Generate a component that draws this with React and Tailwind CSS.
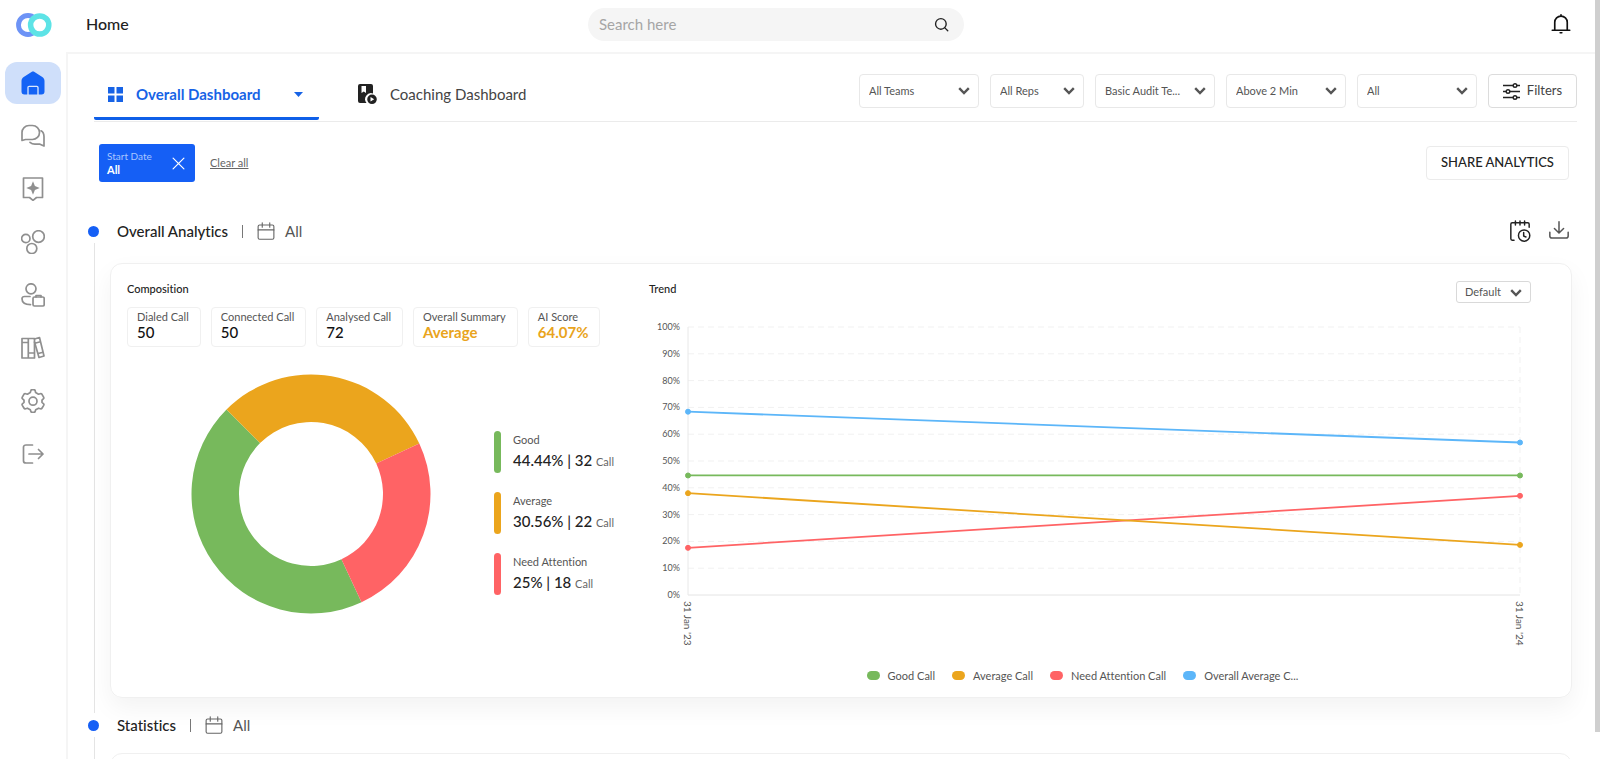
import React from 'react';
import clsx from 'clsx';

const GREEN = '#77b95c';
const ORANGE = '#eba51d';
const RED = '#ff6365';
const BLUE = '#5cb6f9';

const stats = [
  { label: 'Dialed Call', value: '50' },
  { label: 'Connected Call', value: '50' },
  { label: 'Analysed Call', value: '72' },
  { label: 'Overall Summary', value: 'Average', highlight: true },
  { label: 'AI Score', value: '64.07%', highlight: true },
];

const composition = [
  { label: 'Good', percent: '44.44%', calls: 32, color: GREEN, from: 155, to: 315 },
  { label: 'Average', percent: '30.56%', calls: 22, color: ORANGE, from: -45, to: 65 },
  { label: 'Need Attention', percent: '25%', calls: 18, color: RED, from: 65, to: 155 },
];

const trend = [
  { label: 'Good Call', color: GREEN, start: 44.6, end: 44.6 },
  { label: 'Need Attention Call', color: RED, start: 17.6, end: 37 },
  { label: 'Average Call', color: ORANGE, start: 38, end: 18.7 },
  { label: 'Overall Average Call', color: BLUE, start: 68.4, end: 56.9 },
];

const legend = [
  { label: 'Good Call', color: GREEN },
  { label: 'Average Call', color: ORANGE },
  { label: 'Need Attention Call', color: RED },
  { label: 'Overall Average C...', color: BLUE },
];

const ticks = [100, 90, 80, 70, 60, 50, 40, 30, 20, 10, 0];

const filters = [
  { label: 'Teams', value: 'All Teams', width: 'w-[120px]' },
  { label: 'Reps', value: 'All Reps', width: 'w-[94px]' },
  { label: 'Audit template', value: 'Basic Audit Te...', width: 'w-[120px]' },
  { label: 'Duration', value: 'Above 2 Min', width: 'w-[120px]' },
  { label: 'Type', value: 'All', width: 'w-[120px]' },
];

const Icon = ({ size = 24, stroke = 1.4, className, children }) => (
  <svg
    width={size}
    height={size}
    viewBox="0 0 24 24"
    fill="none"
    stroke="currentColor"
    strokeWidth={stroke}
    strokeLinecap="round"
    strokeLinejoin="round"
    className={clsx('shrink-0', className)}
    aria-hidden="true"
  >
    {children}
  </svg>
);

const Logo = () => (
  <svg width="36" height="24" viewBox="0 0 36 24" fill="none" aria-hidden="true">
    <circle cx="12" cy="12" r="9.5" stroke="#6d93f6" strokeWidth="4.800" />
    <circle cx="23.700" cy="12" r="9.100" fill="white" stroke="#5de3e6" strokeWidth="5.500" />
  </svg>
);

const navItems = [
  {
    name: 'Home',
    active: true,
    icon: (
      <>
        <path
          d="M12 .6c.5 0 1 .1 1.500.5l7.800 4.900c1.400.9 2.200 2.200 2.200 3.900v10.700c0 2-1 3-3 3h-17c-2 0-3-1-3-3V9.900C.5 8.200 1.300 6.900 2.700 6l7.800-4.900c.5-.4 1-.5 1.500-.5z"
          fill="currentColor"
          stroke="none"
        />
        <path d="M7 24V16.500c0-.8.400-1.200 1.200-1.200h7.600c.8 0 1.200.4 1.200 1.200V24" stroke="#dbe8fd" strokeWidth="1.300" />
      </>
    ),
  },
  {
    name: 'Conversations',
    icon: (
      <>
        <path d="M1 16.500V8.500a7 7 0 0 1 7-7h3.500a7 7 0 0 1 0 14H4.500z" />
        <path d="M9 18.300c1.300 1.200 3 1.900 4.900 1.900H19l4 1.800v-9.200c0-3-1.300-5.200-3-6" />
      </>
    ),
  },
  {
    name: 'Insights',
    icon: (
      <>
        <path d="M2.500 1h19v19.500h-6L12 23.300 8.500 20.500h-6z" />
        <path d="M12 4.300l1.900 4.800 4.800 1.900-4.800 1.900L12 17.700l-1.900-4.800-4.800-1.900 4.800-1.900z" fill="currentColor" stroke="none" />
      </>
    ),
  },
  {
    name: 'Teams',
    icon: (
      <>
        <circle cx="17.500" cy="6.500" r="5.800" />
        <circle cx="4.800" cy="8.500" r="4.200" />
        <circle cx="10.800" cy="18.500" r="5" />
      </>
    ),
  },
  {
    name: 'Accounts',
    icon: (
      <>
        <circle cx="10" cy="5.800" r="5" />
        <path d="M9 13.500H3.500C2 13.500 1 14.300 1 15.800c0 3.700 3 5.800 8.500 5.800" />
        <rect x="12" y="14" width="11.200" height="9" rx="1.500" />
        <path d="M15 14v-1.500h5V14" />
      </>
    ),
  },
  {
    name: 'Library',
    icon: (
      <>
        <path d="M1 2.500h12.500v19.500H1zM7.300 2.500V22M1 6.500h6.300M7.300 17h6.200" />
        <path d="M13.500 3l5-1.500 4.500 18.500-5 1.500L13.500 6M14.700 7l4.800-1.300M17.200 17.500l4.800-1.300" />
      </>
    ),
  },
  {
    name: 'Settings',
    icon: (
      <>
        <path d="M9.800 1.800C10 1 10.500.6 11.200.6h1.600c.7 0 1.200.4 1.400 1.200l.4 1.700 2.900 1.700 1.700-.5c.8-.2 1.400 0 1.800.6l1.600 2.800c.4.700.3 1.300-.3 1.800L21 11.100v2.300l1.400 1.200c.6.500.7 1.100.3 1.800L21.100 19c-.4.700-1 .9-1.800.7l-1.700-.5-2.900 1.600-.5 1.500c-.2.800-.7 1.100-1.400 1.100h-1.600c-.7 0-1.200-.4-1.400-1.100l-.5-1.500-2.900-1.600-1.700.5c-.8.200-1.400 0-1.800-.7l-1.600-2.600c-.4-.7-.3-1.300.3-1.800L3 13.400v-2.300L1.600 9.900C1 9.400.9 8.800 1.300 8.100L2.900 5.300c.4-.6 1-.8 1.800-.6l1.700.5 2.900-1.700z" />
        <circle cx="12" cy="12.200" r="4" />
      </>
    ),
  },
  {
    name: 'Log out',
    icon: <path d="M11.500 3H5C3.500 3 2.500 3.800 2.500 5v14c0 1.200 1 2 2.500 2h6.500M8 12h14M17.500 7.500L22 12l-4.500 4.500" />,
  },
];

const Chevron = ({ className }) => (
  <svg
    width="12"
    height="8"
    viewBox="0 0 12 8"
    fill="none"
    stroke="#555"
    strokeWidth="2.400"
    className={clsx('pointer-events-none absolute', className)}
    aria-hidden="true"
  >
    <path d="M1.200 1.200L6 6l4.800-4.800" />
  </svg>
);

const CalendarIcon = () => (
  <Icon size={18} stroke={1.5} className="text-[#666]">
    <rect x="1.500" y="4" width="21" height="19" rx="2" />
    <path d="M1.500 10.500h21M7 1v6M17 1v6" />
  </Icon>
);

const Sidebar = () => (
  <aside className="w-[66px] shrink-0">
    <div className="flex h-[53px] items-center pl-4 pb-1">
      <Logo />
    </div>
    <nav className="flex flex-col gap-[11px] px-[5px] pt-[9px]">
      {navItems.map(({ name, active, icon }) => (
        <button
          key={name}
          type="button"
          aria-label={name}
          className={clsx(
            'flex h-[42px] items-center justify-center rounded-xl',
            active ? 'bg-[#cfdffa] text-[#1463f5]' : 'text-[#8f8f8f]'
          )}
        >
          <Icon stroke={1.7}>{icon}</Icon>
        </button>
      ))}
    </nav>
  </aside>
);

const Header = () => (
  <header className="flex h-[52px] shrink-0 items-center justify-between pl-5 pr-6 pb-1">
    <h1 className="w-[400px] text-base font-medium text-[#222]">Home</h1>
    <div className="flex h-[33px] w-[376px] items-center rounded-full bg-[#f5f5f5] pl-[11px] pr-[15px]">
      <input
        type="text"
        aria-label="Search"
        placeholder="Search here"
        className="min-w-0 flex-1 bg-transparent text-[15px] outline-none placeholder:text-[#a5a5a5]"
      />
      <button type="button" aria-label="Submit search" className="text-[#222]">
        <Icon size={15} stroke={2.2}>
          <circle cx="11" cy="11" r="8.500" />
          <path d="M17 17l5 5" />
        </Icon>
      </button>
    </div>
    <div className="flex w-[505px] justify-end">
      <button type="button" aria-label="Notifications" className="text-[#111]">
        <Icon size={20} stroke={2}>
          <path d="M4.500 19V10a7.500 7.500 0 0 1 15 0v9M1.500 19.500h21M12 1v1.500M11 22.500h2" />
        </Icon>
      </button>
    </div>
  </header>
);

const Tabs = () => (
  <div className="flex items-stretch justify-between border-b border-[#ebebeb]">
    <div className="flex items-stretch gap-[39px] pb-px">
      <button
        type="button"
        className="flex w-[225px] items-center justify-between rounded-xs border-b-3 border-[#0f5fe8] pl-[14px] pr-4 pt-[18px] text-[#1763e6]"
      >
        <span className="flex items-center gap-[13px]">
          <svg width="15" height="15" viewBox="0 0 15 15" fill="currentColor" aria-hidden="true">
            <path d="M0 0h6.500v6.500H0zM8.500 0H15v6.500H8.500zM0 8.500h6.500V15H0zM8.500 8.500H15V15H8.500z" />
          </svg>
          <span className="text-[15px] font-bold">Overall Dashboard</span>
        </span>
        <svg width="9" height="5" viewBox="0 0 9 5" fill="currentColor" aria-hidden="true">
          <path d="M0 0h9L4.500 5z" />
        </svg>
      </button>
      <button type="button" className="flex items-center gap-3 pt-[15px] text-[15px] text-[#444]">
        <svg width="20" height="21" viewBox="0 0 20 21" fill="#222" aria-hidden="true">
          <path d="M2 0h11a2 2 0 0 1 2 2v7.500a6 6 0 0 0-6.500 9.500H2a2 2 0 0 1-2-2V2a2 2 0 0 1 2-2zM3.500 2v7l2.300-1.600L8 9V2z" fillRule="evenodd" />
          <path d="M14 10.500a4.800 4.800 0 1 1 0 9.600 4.800 4.800 0 0 1 0-9.600zm-1.500 2.500v4.600l3.700-2.300z" fillRule="evenodd" />
        </svg>
        Coaching Dashboard
      </button>
    </div>
    <div className="flex gap-[11px] pb-[13px] pt-5">
      {filters.map(({ label, value, width }) => (
        <div key={label} className={clsx('relative h-[34px]', width)}>
          <select
            aria-label={label}
            className="block h-full w-full appearance-none rounded-sm border border-[#e8e8e8] bg-white pl-[9px] text-[11px] text-[#555]"
          >
            <option>{value}</option>
          </select>
          <Chevron className="right-[9px] top-[13px]" />
        </div>
      ))}
      <button
        type="button"
        className="flex h-[34px] w-[89px] items-center justify-center gap-[7px] rounded-sm border border-[#dcdcdc] text-[13px] text-[#444]"
      >
        <svg width="17" height="17" viewBox="0 0 17 17" fill="white" stroke="#222" strokeWidth="1.400" aria-hidden="true">
          <path d="M0 2.500h17M0 8.500h17M0 14.500h17" />
          <circle cx="12" cy="2.500" r="1.800" />
          <circle cx="5" cy="8.500" r="1.800" />
          <circle cx="12" cy="14.500" r="1.800" />
        </svg>
        Filters
      </button>
    </div>
  </div>
);

const ActiveFilters = () => (
  <div className="flex items-center justify-between pl-[5px] pr-2 pt-[22px]">
    <div className="flex items-center gap-[15px]">
      <div className="flex h-[38px] w-24 items-center justify-between rounded-[3px] bg-[#155ff5] pl-2 pr-[10px] text-white">
        <div className="text-[11px] leading-[14px]">
          <div className="text-[10px] text-[#a9c6ff]">Start Date</div>
          <div className="font-bold">All</div>
        </div>
        <button type="button" aria-label="Remove start date filter">
          <Icon size={13} stroke={2.2}>
            <path d="M2 2l20 20M22 2L2 22" />
          </Icon>
        </button>
      </div>
      <a href="#clear" className="text-[11px] text-[#666] underline">
        Clear all
      </a>
    </div>
    <button type="button" className="h-[34px] w-[143px] rounded-sm border border-[#ebebeb] text-[13px] font-medium text-[#222]">
      SHARE ANALYTICS
    </button>
  </div>
);

const SectionTitle = ({ title, children }) => (
  <div className="flex h-6 items-center justify-between pr-2">
    <div className="flex items-center">
      <span className="-ml-[6px] mr-[18px] size-[11px] rounded-full bg-[#155ff5]" />
      <h2 className="text-[15px] font-medium text-[#222]">{title}</h2>
      <span className="mx-[14px] h-[13px] w-px bg-[#777]" />
      <CalendarIcon />
      <span className="ml-[10px] text-[15px] text-[#555]">All</span>
    </div>
    {children}
  </div>
);

// angles in degrees, clockwise from 12 o'clock
const arc = (from, to) => {
  const point = (angle, r) => {
    const rad = (angle * Math.PI) / 180;
    return `${120 + r * Math.sin(rad)} ${120 - r * Math.cos(rad)}`;
  };
  return `M${point(from, 119.5)}A119.5 119.5 0 0 1 ${point(to, 119.5)}L${point(to, 72)}A72 72 0 0 0 ${point(from, 72)}Z`;
};

const Composition = () => (
  <div className="w-[522px] shrink-0">
    <h3 className="text-[11px] leading-4 font-medium text-[#222]">Composition</h3>
    <div className="mt-[10px] flex gap-[10px]">
      {stats.map(({ label, value, highlight }) => (
        <div key={label} className="h-10 rounded-sm border border-[#f0f0f0] pl-[9px] pr-[11px] pt-px">
          <div className="text-[11px] leading-[15px] whitespace-nowrap text-[#555]">{label}</div>
          <div className={clsx('text-[15px] leading-4', highlight ? 'font-bold text-[#e9a41c]' : 'font-medium text-[#111]')}>
            {value}
          </div>
        </div>
      ))}
    </div>
    <div className="flex items-center gap-[63px] pl-16 pt-[27px]">
      <svg width="240" height="240" viewBox="0 0 240 240" role="img" aria-label="Call composition">
        {composition.map(({ label, color, from, to }) => (
          <path key={label} d={arc(from, to)} fill={color} />
        ))}
      </svg>
      <ul className="flex flex-col gap-[19px] pt-[38px]">
        {composition.map(({ label, percent, calls, color }) => (
          <li key={label} className="flex items-center gap-3">
            <span className="h-[42px] w-[7px] rounded-full" style={{ backgroundColor: color }} />
            <div className="whitespace-nowrap">
              <div className="text-[11px] leading-[18px] text-[#555]">{label}</div>
              <div className="text-[15px] leading-[22px] font-medium text-[#222]">
                {percent} | {calls} <span className="text-[11px] font-normal text-[#666]">Call</span>
              </div>
            </div>
          </li>
        ))}
      </ul>
    </div>
  </div>
);

const Trend = () => (
  <div className="min-w-0 flex-1">
    <div className="flex items-start justify-between pr-6">
      <h3 className="text-[11px] leading-4 font-medium text-[#222]">Trend</h3>
      <div className="relative h-[22px] w-[75px]">
        <select
          aria-label="Trend range"
          className="block h-full w-full appearance-none rounded-[3px] border border-[#d9d9d9] bg-white pl-2 text-[11px] text-[#555]"
        >
          <option>Default</option>
        </select>
        <Chevron className="right-[9px] top-[8px]" />
      </div>
    </div>
    <div className="mt-[18px] flex gap-2 pr-[35px]">
      <div className="-my-[1px] flex w-[31px] flex-col justify-between text-right text-[9px] leading-[14px] text-[#555]">
        {ticks.map((tick) => (
          <span key={tick}>{tick}%</span>
        ))}
      </div>
      <div className="min-w-0 flex-1 py-[6px]">
        <svg width="100%" height="268" className="overflow-visible" role="img" aria-label="Call trend">
          {ticks.map((tick) => (
            <line
              key={tick}
              x1="0%"
              x2="100%"
              y1={`${100 - tick}%`}
              y2={`${100 - tick}%`}
              stroke={tick === 0 ? '#e4e4e4' : '#f1f1f1'}
              strokeDasharray={tick === 0 ? undefined : '6 4'}
            />
          ))}
          <line x1="0%" x2="0%" y1="0%" y2="100%" stroke="#e8e8e8" />
          <line x1="100%" x2="100%" y1="0%" y2="100%" stroke="#f1f1f1" strokeDasharray="6 4" />
          {trend.map(({ label, color, start, end }) => (
            <g key={label} stroke={color} fill={color}>
              <line x1="0%" x2="100%" y1={`${100 - start}%`} y2={`${100 - end}%`} strokeWidth="1.800" />
              <circle cx="0%" cy={`${100 - start}%`} r="2.500" />
              <circle cx="100%" cy={`${100 - end}%`} r="2.500" />
            </g>
          ))}
        </svg>
      </div>
    </div>
    <div className="flex justify-between pl-8 pr-7 text-[10px] leading-[14px] text-[#555]">
      <span className="[writing-mode:vertical-rl]">31 Jan '23</span>
      <span className="[writing-mode:vertical-rl]">31 Jan '24</span>
    </div>
    <ul className="mt-[22px] flex justify-center gap-[17px] pr-[39px] text-[11px] leading-4 text-[#555]">
      {legend.map(({ label, color }) => (
        <li key={label} className="flex items-center gap-2">
          <span className="h-[9px] w-[13px] rounded-full" style={{ backgroundColor: color }} />
          {label}
        </li>
      ))}
    </ul>
  </div>
);

const App = () => {
  return (
    <div className="flex h-screen overflow-hidden bg-white font-['Lato','Liberation_Sans',sans-serif] [font-variant-ligatures:none]">
      <Sidebar />
      <div className="flex min-w-0 flex-1 flex-col">
        <Header />
        <main className="min-h-0 flex-1 overflow-hidden border-l-2 border-t-2 border-[#f5f5f5] pl-[26px] pr-[18px]">
          <Tabs />
          <ActiveFilters />
          <div className="pt-[37px]">
            <section>
              <SectionTitle title="Overall Analytics">
                <div className="flex items-center gap-[18px]">
                  <button type="button" aria-label="Schedule" className="text-[#222]">
                    <Icon size={22} stroke={1.6}>
                      <path d="M5.500 22H3.500C2.500 22 2 21.500 2 20.500V4.500C2 3.500 2.500 3 3.500 3h17c1 0 1.500.5 1.500 1.500V8M7 1v4.500M12 1v4.500M17 1v4.500" />
                      <circle cx="16.500" cy="17" r="6.200" />
                      <path d="M16 13.500V17.500l2.500 1" />
                    </Icon>
                  </button>
                  <button type="button" aria-label="Download" className="text-[#555]">
                    <Icon size={20} stroke={1.8}>
                      <path d="M12 1v13M6.500 9l5.500 5.500L17.500 9M1 13.500V18c0 1.500 1 2.500 2.500 2.500h17c1.500 0 2.500-1 2.500-2.500v-4.500" />
                    </Icon>
                  </button>
                </div>
              </SectionTitle>
              <div className="border-l border-[#e4e4e4] pb-[15px] pl-[15px] pr-[5px] pt-5">
                <div className="flex h-[435px] rounded-xl border border-[#f0f0f0] px-4 pt-[17px] shadow-[0_10px_24px_rgba(0,0,0,0.05)]">
                  <Composition />
                  <Trend />
                </div>
              </div>
            </section>
            <section>
              <SectionTitle title="Statistics" />
              <div className="border-l border-[#e4e4e4] pl-[15px] pr-[5px] pt-4">
                <div className="h-[300px] rounded-xl border border-[#f0f0f0]" />
              </div>
            </section>
          </div>
        </main>
      </div>
      <div className="w-[5px] shrink-0 pb-[27px]">
        <div className="h-full bg-[#cfcfcf]" />
      </div>
    </div>
  );
};

export default App;
